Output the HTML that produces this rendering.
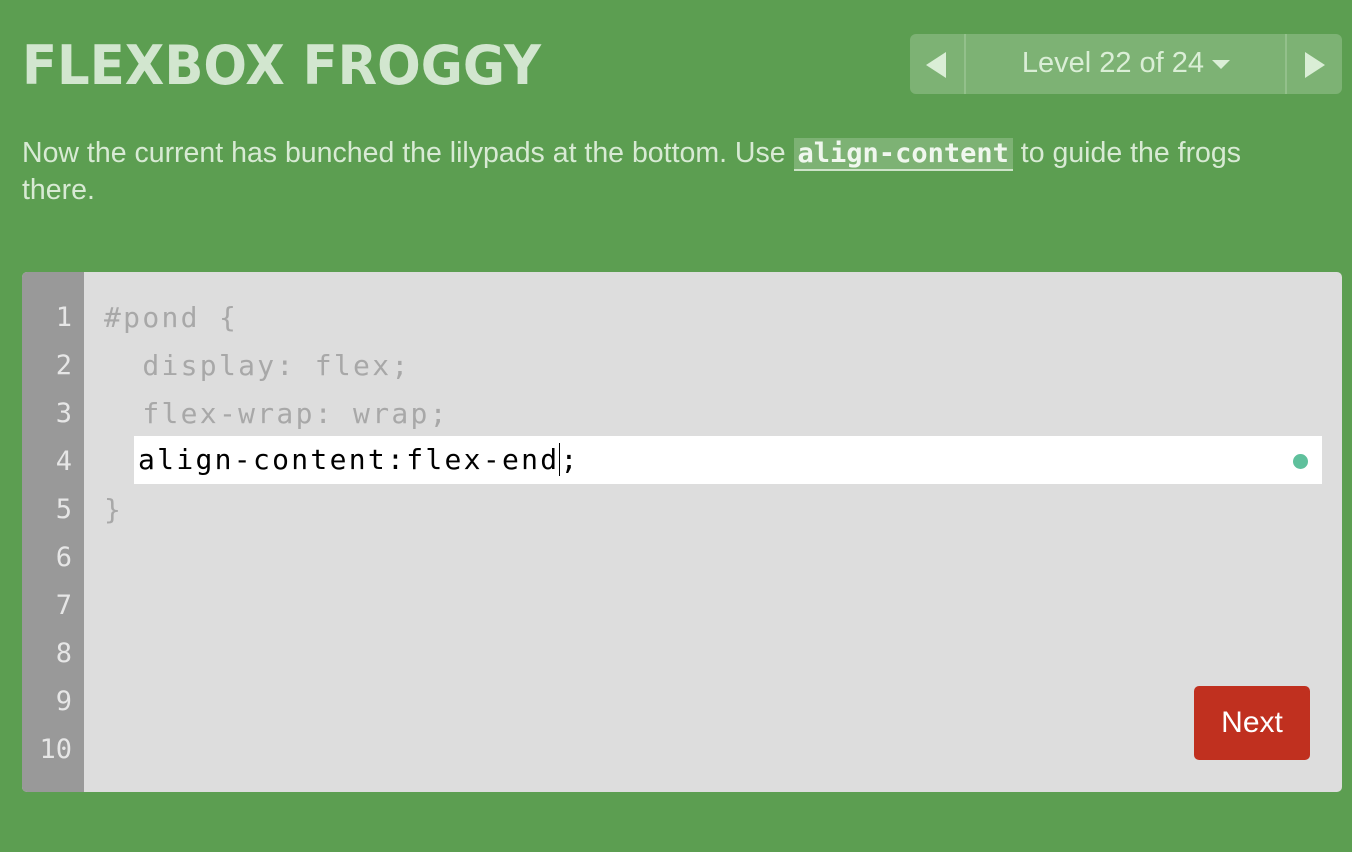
<!DOCTYPE html>
<html><head><meta charset="utf-8"><style>
body{margin:0;width:1352px;height:852px;background:#5c9e51;font-family:"Liberation Sans",sans-serif;position:relative;overflow:hidden}
.title{position:absolute;left:22px;top:36px;font-size:54px;font-weight:900;color:#d2e6cf;letter-spacing:0px;font-family:"DejaVu Sans","Liberation Sans",sans-serif;line-height:60px;transform:scaleX(0.95);transform-origin:left;white-space:nowrap}
.nav{position:absolute;left:910px;top:34px;width:432px;height:60px;background:#7db274;border-radius:6px}
.nav .sep{position:absolute;top:0;width:2px;height:60px;background:#93c08b}
.lvl{position:absolute;top:0;height:60px;line-height:58px;font-size:29px;color:#daeed6;text-align:center;width:320px}
.desc{position:absolute;left:22px;top:135px;width:1290px;font-size:28.5px;line-height:37px;color:#d8ead4}
.code{background:#7db274;color:#f0f7ee;font-family:"DejaVu Sans Mono",monospace;font-weight:bold;font-size:27px;padding:0 4px;border-bottom:2px solid #cde3c8}
.editor{position:absolute;left:22px;top:272px;width:1320px;height:520px;background:#ddd;border-radius:5px;overflow:hidden}
.gutter{position:absolute;left:0;top:0;width:62px;height:520px;background:#999}
.ln{position:absolute;right:12px;font-family:"DejaVu Sans Mono",monospace;font-size:27px;color:#e6e6e6}
.line{position:absolute;left:82px;font-family:"DejaVu Sans Mono",monospace;font-size:28px;letter-spacing:2.3px;color:#a8a8a8;white-space:pre}
.input{position:absolute;left:112px;top:164px;width:1188px;height:48px;background:#fff}
.next{position:absolute;left:1172px;top:414px;width:116px;height:74px;background:#c0301f;border-radius:5px;color:#fff;font-size:30px;line-height:74px;text-align:center}
</style></head><body>
<div class="title">FLEXBOX FROGGY</div>
<div class="nav">
<svg style="position:absolute;left:16px;top:18px" width="22" height="26"><polygon points="20,0 20,26 0,13" fill="#daeed6"/></svg>
<div class="sep" style="left:54px"></div>
<div class="lvl" style="left:56px">Level 22 of 24 <svg width="18" height="12" style="vertical-align:middle"><polygon points="0,2 18,2 9,11" fill="#daeed6"/></svg></div>
<div class="sep" style="left:375px"></div>
<svg style="position:absolute;left:395px;top:18px" width="22" height="26"><polygon points="0,0 0,26 20,13" fill="#daeed6"/></svg>
</div>
<div class="desc">Now the current has bunched the lilypads at the bottom. Use <span class="code">align-content</span> to guide the frogs there.</div>
<div class="editor">
<div class="gutter">
<div class="ln" style="top:30px">1</div><div class="ln" style="top:78px">2</div><div class="ln" style="top:126px">3</div><div class="ln" style="top:174px">4</div><div class="ln" style="top:222px">5</div><div class="ln" style="top:270px">6</div><div class="ln" style="top:318px">7</div><div class="ln" style="top:366px">8</div><div class="ln" style="top:414px">9</div><div class="ln" style="top:462px">10</div>
</div>
<div class="line" style="top:29px">#pond {</div>
<div class="line" style="top:77px">  display: flex;</div>
<div class="line" style="top:125px">  flex-wrap: wrap;</div>
<div class="input"><div style="position:absolute;left:4px;top:7px;font-family:'DejaVu Sans Mono',monospace;font-size:28px;letter-spacing:2.3px;color:#000;white-space:pre">align-content:flex-end<span style="border-left:1.5px solid #000"></span>;</div>
<div style="position:absolute;right:14px;top:18px;width:15px;height:15px;border-radius:50%;background:#5fc09c"></div></div>
<div class="line" style="top:221px">}</div>
<div class="next">Next</div>
</div>
</body></html>
